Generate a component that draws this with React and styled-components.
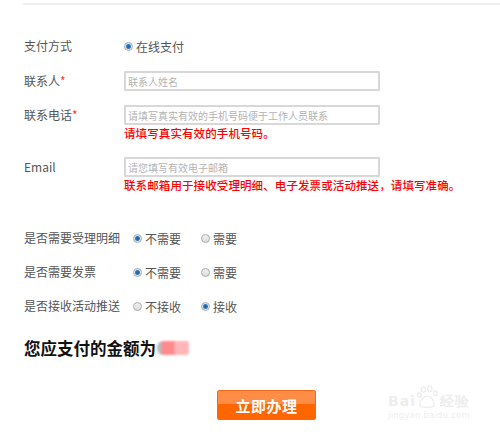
import React from 'react';
import styled, { createGlobalStyle } from 'styled-components';

const GlobalStyle = createGlobalStyle`
  html, body {
    margin: 0;
    padding: 0;
    background: #fff;
  }
  body {
    font-family: "Noto Sans CJK SC", "Open Sans", sans-serif;
  }
`;

const Page = styled.div`
  position: relative;
  width: 500px;
  height: 432px;
  overflow: hidden;
  background: #fff;
`;

const TopRule = styled.div`
  margin: 3px 0 0 23px;
  height: 2px;
  background: #efefef;
`;

const Form = styled.div`
  display: flex;
  flex-direction: column;
  padding-left: 24px;
`;

const Row = styled.div`
  display: grid;
  grid-template-columns: ${(p) => p.labelWidth || 100}px 1fr;
  align-items: start;
  margin-top: ${(p) => p.gap}px;
`;

const Label = styled.div`
  height: 20px;
  line-height: 20px;
  font-size: 12px;
  color: #555;
  white-space: nowrap;
`;

const Star = styled.span`
  color: #f33;
`;

const Control = styled.div`
  display: flex;
  flex-direction: column;
`;

const Input = styled.input`
  box-sizing: border-box;
  width: 256px;
  height: 20px;
  margin: 0;
  padding: 0 2px;
  border: 2px solid #d8d8d8;
  border-radius: 1px;
  font-family: inherit;
  font-size: 10px;
  color: #333;
  outline: none;
  &::placeholder {
    color: #b4b4b4;
  }
`;

const ErrorText = styled.div`
  height: 14px;
  line-height: 14px;
  margin-top: 1px;
  font-size: 11.5px;
  font-weight: 500;
  color: #f00;
  white-space: nowrap;
  letter-spacing: 0.1px;
`;

const Choices = styled.div`
  display: flex;
  align-items: center;
  height: 20px;
`;

const Option = styled.label`
  display: flex;
  align-items: center;
  width: ${(p) => (p.wide ? 68 : 'auto')}px;
  font-size: 12px;
  color: #555;
  white-space: nowrap;
`;

const Radio = styled.span`
  box-sizing: border-box;
  width: 9px;
  height: 9px;
  margin-right: 3px;
  border-radius: 50%;
  border: 1px solid #aaa;
  background: ${(p) =>
    p.checked
      ? 'radial-gradient(circle, #1a5f9e 0, #2a7cc4 2px, #e4e4e4 3px, #f4f4f4 4px)'
      : 'linear-gradient(#f2f2f2, #dcdcdc)'};
`;

const Amount = styled.div`
  display: flex;
  align-items: center;
  height: 24px;
  margin-top: 20px;
  font-size: 16.5px;
  font-weight: 700;
  color: #111;
`;

const Blurred = styled.span`
  display: inline-block;
  width: 32px;
  height: 14px;
  margin-left: 1px;
  border-radius: 6px 2px 2px 6px;
  background: linear-gradient(90deg, #bbb 0, #bbb 4px, #ff8a8e 5px, #ff8a8e 17px, #ffb6b8 18px);
  filter: blur(1px);
`;

const ButtonRow = styled.div`
  display: flex;
  margin-top: 30px;
  padding-left: 217px;
`;

const SubmitButton = styled.button`
  width: 99px;
  height: 30px;
  padding: 0;
  border: 1px solid #f56a1a;
  border-radius: 2px;
  background: linear-gradient(#ff8d45 0, #ff8d45 45%, #ff6600 46%, #ff6600 100%);
  color: #fff;
  font-family: inherit;
  font-size: 15px;
  font-weight: 700;
  letter-spacing: 0.5px;
  cursor: pointer;
`;

const Watermark = styled.div`
  position: absolute;
  right: 30px;
  bottom: 12px;
  display: flex;
  flex-direction: column;
  align-items: flex-start;
  color: #eeeeee;
  pointer-events: none;
`;

const MarkTop = styled.div`
  display: flex;
  align-items: flex-end;
  font-family: "DejaVu Sans", sans-serif;
  font-size: 14px;
  font-weight: 700;
  line-height: 15px;
  letter-spacing: 1px;
`;

const MarkSub = styled.div`
  margin-top: 1px;
  font-family: "DejaVu Sans", sans-serif;
  font-size: 8.5px;
  letter-spacing: 0.2px;
`;

const Paw = () => (
  <svg width="24" height="24" viewBox="0 0 26 26" fill="none" stroke="#ececec" strokeWidth="1.4">
    <ellipse cx="8" cy="5" rx="2.3" ry="3" />
    <ellipse cx="15" cy="4" rx="2.3" ry="3" />
    <ellipse cx="21" cy="9" rx="2" ry="2.6" />
    <ellipse cx="3.5" cy="11" rx="2" ry="2.6" />
    <path d="M4 22 C4 16 8 12 12 12 C16 12 20 16 20 22 C20 25 4 25 4 22 Z" />
  </svg>
);

const ChoiceRow = ({ label, gap, options }) => (
  <Row labelWidth={109} gap={gap}>
    <Label>{label}</Label>
    <Choices>
      {options.map((o, i) => (
        <Option key={o.text} wide={i === 0}>
          <Radio checked={o.checked} />
          {o.text}
        </Option>
      ))}
    </Choices>
  </Row>
);

export default function App() {
  return (
    <Page>
      <GlobalStyle />
      <TopRule />
      <Form>
        <Row gap={31}>
          <Label>支付方式</Label>
          <Choices>
            <Option>
              <Radio checked />
              在线支付
            </Option>
          </Choices>
        </Row>
        <Row gap={15}>
          <Label>
            联系人<Star>*</Star>
          </Label>
          <Control>
            <Input placeholder="联系人姓名" />
          </Control>
        </Row>
        <Row gap={14}>
          <Label>
            联系电话<Star>*</Star>
          </Label>
          <Control>
            <Input placeholder="请填写真实有效的手机号码便于工作人员联系" />
            <ErrorText>请填写真实有效的手机号码。</ErrorText>
          </Control>
        </Row>
        <Row gap={17}>
          <Label>Email</Label>
          <Control>
            <Input placeholder="请您填写有效电子邮箱" />
            <ErrorText>联系邮箱用于接收受理明细、电子发票或活动推送，请填写准确。</ErrorText>
          </Control>
        </Row>
        <ChoiceRow
          label="是否需要受理明细"
          gap={36}
          options={[
            { text: '不需要', checked: true },
            { text: '需要', checked: false },
          ]}
        />
        <ChoiceRow
          label="是否需要发票"
          gap={14}
          options={[
            { text: '不需要', checked: true },
            { text: '需要', checked: false },
          ]}
        />
        <ChoiceRow
          label="是否接收活动推送"
          gap={14}
          options={[
            { text: '不接收', checked: false },
            { text: '接收', checked: true },
          ]}
        />
        <Amount>
          您应支付的金额为
          <Blurred />
        </Amount>
      </Form>
      <ButtonRow>
        <SubmitButton>立即办理</SubmitButton>
      </ButtonRow>
      <Watermark>
        <MarkTop>
          Bai
          <Paw />
          经验
        </MarkTop>
        <MarkSub>jingyan.baidu.com</MarkSub>
      </Watermark>
    </Page>
  );
}
